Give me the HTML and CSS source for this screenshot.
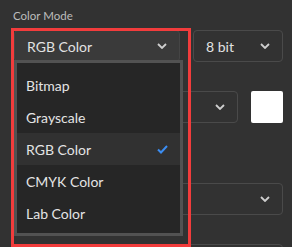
FILE: index.html
```html
<!DOCTYPE html>
<html>
<head>
<meta charset="utf-8">
<link rel="stylesheet" href="styles.css">
</head>
<body>
<div class="panel">
  <div class="label">Color Mode</div>
  <div class="row row1">
    <div class="select main"><span>RGB Color</span><svg class="chev" width="10" height="6" viewBox="0 0 10 6"><path d="M1 1 L5 5 L9 1" fill="none" stroke="#cfcfcf" stroke-width="1.8"/></svg></div>
    <div class="select bits"><span>8 bit</span><svg class="chev" width="10" height="6" viewBox="0 0 10 6"><path d="M1 1 L5 5 L9 1" fill="none" stroke="#cfcfcf" stroke-width="1.8"/></svg></div>
  </div>
  <div class="row row2">
    <div class="select grow"><span></span><svg class="chev" width="10" height="6" viewBox="0 0 10 6"><path d="M1 1 L5 5 L9 1" fill="none" stroke="#cfcfcf" stroke-width="1.8"/></svg></div>
    <div class="swatch"></div>
  </div>
  <div class="row row3">
    <div class="select grow"><span></span><svg class="chev" width="10" height="6" viewBox="0 0 10 6"><path d="M1 1 L5 5 L9 1" fill="none" stroke="#cfcfcf" stroke-width="1.8"/></svg></div>
  </div>
  <div class="row row4">
    <div class="select grow"><span></span></div>
  </div>

  <div class="menu">
    <div class="item">Bitmap</div>
    <div class="item">Grayscale</div>
    <div class="item selected">RGB Color<svg class="check" width="11" height="9" viewBox="0 0 11 9"><path d="M1 4.5 L4 7.5 L10 1" fill="none" stroke="#3b8df2" stroke-width="2"/></svg></div>
    <div class="item">CMYK Color</div>
    <div class="item">Lab Color</div>
  </div>
  <div class="highlight"></div>
</div>
</body>
</html>
```
FILE: styles.css
```css
html, body {
  margin: 0;
  padding: 0;
  background: #323232;
}
.panel {
  position: relative;
  width: 292px;
  height: 247px;
  overflow: hidden;
  box-sizing: border-box;
  padding: 9px 9px 0 14px;
  font-family: Lato, "Open Sans", sans-serif;
  color: #e2e2e2;
}
.label {
  font-size: 11.5px;
  line-height: 14px;
  color: #bdbdbd;
  margin-left: -1px;
}
.row {
  display: flex;
  gap: 13px;
}
.row1 { margin-top: 7px; }
.row2 { margin-top: 29px; width: 269px; }
.row3 { margin-top: 60px; }
.row4 { margin-top: 29px; }
.select {
  box-sizing: border-box;
  height: 32px;
  border: 1px solid #4a4a4a;
  border-radius: 4px;
  display: flex;
  align-items: center;
  justify-content: space-between;
  padding: 0 12px 0 12px;
  font-size: 14px;
}
.select.main {
  width: 166px;
  background: #3a3a3a;
  border-color: #454545;
}
.bits {
  width: 90px;
}
.grow {
  flex: 1;
}
.chev {
  display: block;
}
.swatch {
  width: 32px;
  height: 32px;
  background: #ffffff;
  border-radius: 2px;
}
.menu {
  position: absolute;
  left: 14px;
  top: 60px;
  width: 169px;
  height: 176px;
  box-sizing: border-box;
  border: 3px solid #525252;
  background: #262626;
  padding: 6px 0 4px 0;
}
.item {
  height: 32px;
  display: flex;
  align-items: center;
  justify-content: space-between;
  padding: 0 12px 0 9px;
  font-size: 14px;
  color: #e4e4e4;
}
.item.selected {
  background: #313131;
}
.check {
  display: block;
}
.highlight {
  position: absolute;
  left: 11px;
  top: 28px;
  width: 180px;
  height: 219px;
  box-sizing: border-box;
  border: 3px solid #f23c3c;
}
```
